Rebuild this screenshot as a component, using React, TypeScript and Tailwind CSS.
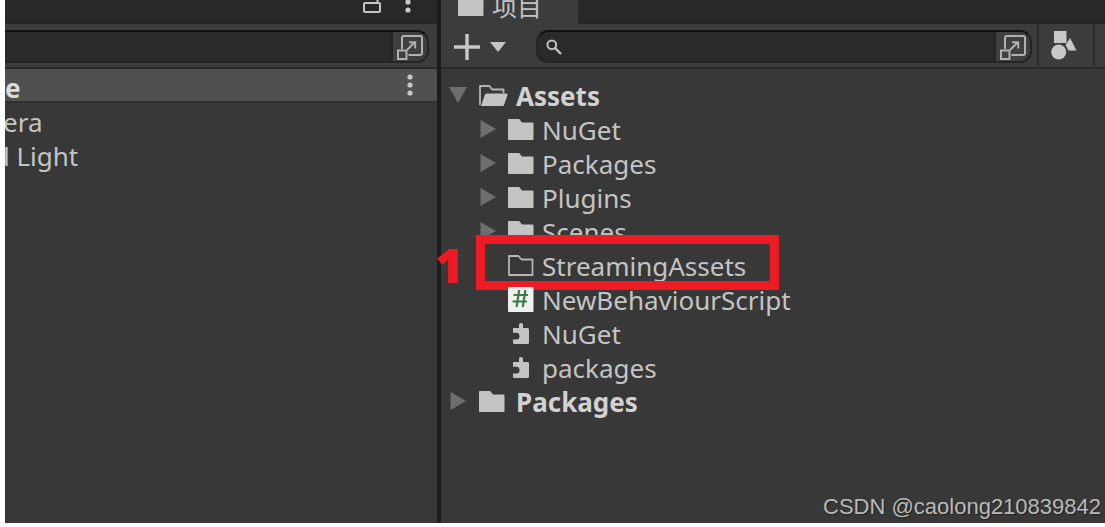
import type { ReactNode } from "react";

type IconName = "folder" | "open" | "empty" | "script" | "plugin";

type Item = {
  name: string;
  icon: IconName;
  expandable?: boolean;
  marked?: boolean;
};

const assets: Item[] = [
  { name: "NuGet", icon: "folder", expandable: true },
  { name: "Packages", icon: "folder", expandable: true },
  { name: "Plugins", icon: "folder", expandable: true },
  { name: "Scenes", icon: "folder", expandable: true },
  { name: "StreamingAssets", icon: "empty", marked: true },
  { name: "NewBehaviourScript", icon: "script" },
  { name: "NuGet", icon: "plugin" },
  { name: "packages", icon: "plugin" },
];

function FolderIcon() {
  return (
    <svg width="26" height="21" viewBox="0 0 26 21" fill="#c4c4c4">
      <path d="M0 1Q0 0 1 0H10.5Q11.5 0 12 1L14 3.5H24.5Q25.5 3.5 25.5 4.5V20Q25.5 21 24.5 21H1Q0 21 0 20Z" />
    </svg>
  );
}

function EmptyFolderIcon() {
  return (
    <svg width="26" height="21" viewBox="0 0 26 21" fill="none">
      <path
        d="M1 1H10.5L13.5 4.5H24.5V20H1Z"
        stroke="#b4b4b4"
        strokeWidth="1.8"
        strokeLinejoin="round"
      />
    </svg>
  );
}

function OpenFolderIcon() {
  return (
    <svg width="29" height="21" viewBox="0 0 29 21" fill="none">
      <path
        d="M1 20V1H10.5L13 4.5H24.5V8"
        stroke="#b4b4b4"
        strokeWidth="1.8"
        strokeLinejoin="round"
      />
      <path
        d="M2 21L6 9.5Q6.5 8.5 8 8.5H27.5Q29 8.5 28.5 10L25.2 19.5Q24.7 21 23.5 21Z"
        fill="#c4c4c4"
      />
    </svg>
  );
}

function ScriptIcon() {
  return (
    <svg width="26" height="25" viewBox="0 0 26 25">
      <rect width="25.5" height="25" rx="1" fill="#f0f0f0" />
      <path
        d="M11.2 3L8.6 20M17.4 3L14.8 20M5.5 8H20M4.5 14.5H19"
        stroke="#3b7d4a"
        strokeWidth="2.2"
      />
    </svg>
  );
}

function PluginIcon() {
  return (
    <svg width="16" height="21" viewBox="0 0 16 21" fill="#c4c4c4">
      <path d="M0 5H6V1.5Q6 0 8 0T10 1.5V5H14.5Q16 5 16 6.5V19.5Q16 21 14.5 21H1.5Q0 21 0 19.5V16.5H3.5Q6.5 16.5 6.5 13.2T3.5 9.8H0Z" />
    </svg>
  );
}

function ItemIcon({ name }: { name: IconName }) {
  if (name === "open") return <OpenFolderIcon />;
  if (name === "empty") return <EmptyFolderIcon />;
  if (name === "script") return <ScriptIcon />;
  if (name === "plugin") return <PluginIcon />;
  return <FolderIcon />;
}

function Arrow({ open, label }: { open?: boolean; label: string }) {
  return (
    <button
      aria-label={label}
      aria-expanded={!!open}
      className="flex w-[18px] justify-center"
    >
      <svg width="18" height="18" viewBox="0 0 18 18" fill="#6e6e6e">
        {open ? <path d="M0 1H18L9 17Z" /> : <path d="M1.5 0V18L17 9Z" />}
      </svg>
    </button>
  );
}

function Kebab() {
  return (
    <svg width="6" height="22" viewBox="0 0 6 22" fill="#c8c8c8">
      <circle cx="3" cy="3" r="2.6" />
      <circle cx="3" cy="11" r="2.6" />
      <circle cx="3" cy="19" r="2.6" />
    </svg>
  );
}

function ExpandIcon() {
  return (
    <svg
      width="26"
      height="25"
      viewBox="0 0 26 25"
      fill="none"
      stroke="#b0b0b0"
      strokeWidth="2"
    >
      <path d="M5 14V3Q5 1 7 1H23Q25 1 25 3V18Q25 20 23 20H11.5" />
      <rect x="1" y="15.5" width="8.5" height="8.5" />
      <path d="M10 15L17.5 7.5M12 7.2H18.2V13.5" />
    </svg>
  );
}

function PickerButton({ label }: { label: string }) {
  return (
    <button
      aria-label={label}
      className="flex w-[37px] shrink-0 items-center justify-center border-l-3 border-[#252525] bg-[#3f3f3f] pt-0.5"
    >
      <ExpandIcon />
    </button>
  );
}

function Toolbar({ children }: { children: ReactNode }) {
  return (
    <div className="flex h-[45px] items-center border-b-2 border-[#2a2a2a] bg-[#3c3c3c] pt-0.5">
      {children}
    </div>
  );
}

function HierarchyPanel() {
  return (
    <section className="min-w-0 overflow-hidden">
      <div className="flex h-6 items-end justify-end gap-6 overflow-hidden border-b border-[#232323] bg-[#282828] pr-[26px]">
        <button aria-label="Lock" className="pb-2.5">
          <svg
            width="18"
            height="16"
            viewBox="0 0 18 16"
            fill="none"
            stroke="#c4c4c4"
            strokeWidth="2"
          >
            <rect x="1" y="6" width="16" height="9" rx="1" />
            <path d="M14.5 6V0" />
          </svg>
        </button>
        <button aria-label="Menu" className="pb-2.5">
          <Kebab />
        </button>
      </div>
      <Toolbar>
        <div className="mr-2 flex h-[33px] flex-1 overflow-hidden rounded-r-xl border-2 border-l-0 border-[#252525] border-t-[#111] bg-[#2a2a2a]">
          <input
            type="text"
            aria-label="Search hierarchy"
            className="min-w-0 flex-1 bg-transparent text-[#c4c4c4] outline-none"
          />
          <PickerButton label="Hierarchy search filter" />
        </div>
      </Toolbar>
      <div className="flex h-[34px] items-center justify-between border-b-2 border-[#2f2f2f] bg-[#505050] pr-6">
        <span className="pt-1.5 font-bold text-[#dcdcdc]">e</span>
        <button aria-label="Scene menu">
          <Kebab />
        </button>
      </div>
      <ul className="pt-0.5">
        <li className="-ml-0.5">era</li>
        <li className="-ml-0.5">l Light</li>
      </ul>
    </section>
  );
}

function Marker() {
  return (
    <>
      <div className="absolute -top-3.5 left-[35px] h-[55px] w-[303px] border-9 border-[#ed1c24]" />
      <span className="absolute -top-0.5 -left-1.5 font-['Open_Sans',sans-serif] text-5xl/9 font-extrabold text-[#ed1c24]">
        1
      </span>
    </>
  );
}

function TreeRow({ item }: { item: Item }) {
  return (
    <li className="relative flex h-[34px] items-center pl-[38px]">
      <div className="mb-0.5 flex w-[29px] items-center">
        {item.expandable && <Arrow label={item.name} />}
      </div>
      <div className="mb-0.5 flex w-[26px] justify-center">
        <ItemIcon name={item.icon} />
      </div>
      <span className="ml-2">{item.name}</span>
      {item.marked && <Marker />}
    </li>
  );
}

function RootRow({ name, open }: { name: string; open?: boolean }) {
  return (
    <div className="flex h-[34px] items-center pl-2">
      <div className="mb-0.5 flex w-[30px] items-center">
        <Arrow open={open} label={name} />
      </div>
      <div className="mb-0.5 flex w-[29px]">
        <ItemIcon name={open ? "open" : "folder"} />
      </div>
      <span className="ml-2 font-bold text-[#d2d2d2]">{name}</span>
    </div>
  );
}

function ProjectPanel() {
  return (
    <section className="min-w-0">
      <div className="flex h-6 items-end overflow-hidden bg-[#282828]">
        <button className="flex h-8 w-[137px] shrink-0 items-end gap-2 bg-[#3c3c3c] pb-1.5 pl-[17px] text-[25px]/6">
          <span className="pb-0.5">
            <FolderIcon />
          </span>
          项目
        </button>
        <div className="h-full flex-1 border-b border-[#232323]" />
      </div>
      <Toolbar>
        <button
          aria-label="Create"
          className="ml-[13px] flex shrink-0 items-center gap-2.5"
        >
          <svg width="26" height="26" viewBox="0 0 26 26">
            <path d="M13 0V26M0 13H26" stroke="#c8c8c8" strokeWidth="3.4" />
          </svg>
          <svg width="16" height="10" viewBox="0 0 16 10" fill="#c4c4c4">
            <path d="M0 0H16L8 10Z" />
          </svg>
        </button>
        <div className="mr-[5px] ml-[30px] flex h-[33px] min-w-0 flex-1 overflow-hidden rounded-xl border-2 border-[#252525] border-t-[#111] bg-[#2a2a2a]">
          <label htmlFor="project-search" className="flex items-center pl-2">
            <svg
              width="16"
              height="16"
              viewBox="0 0 16 16"
              fill="none"
              stroke="#c4c4c4"
            >
              <circle cx="5.8" cy="5.8" r="4.4" strokeWidth="2" />
              <path d="M9 9L15 15" strokeWidth="2.4" />
            </svg>
          </label>
          <input
            id="project-search"
            type="text"
            aria-label="Search project"
            className="min-w-0 flex-1 bg-transparent pl-2 text-[#c4c4c4] outline-none"
          />
          <PickerButton label="Project search filter" />
        </div>
        <button
          aria-label="Search by type"
          className="-mt-0.5 flex h-full w-[58px] shrink-0 items-center border-x-2 border-[#2a2a2a] pl-3"
        >
          <svg width="26" height="29" viewBox="0 0 26 29" fill="#c8c8c8">
            <rect x="3" width="12.5" height="12" />
            <circle cx="7.7" cy="21" r="7.5" />
            <path d="M19 7L25.5 19.5H17.5L14.5 14Z" />
          </svg>
        </button>
        <div className="w-2.5 shrink-0" />
      </Toolbar>
      <div className="pt-2.5">
        <RootRow name="Assets" open />
        <ul>
          {assets.map((item, i) => (
            <TreeRow key={i} item={item} />
          ))}
        </ul>
        <RootRow name="Packages" />
      </div>
    </section>
  );
}

function App() {
  return (
    <div className="min-h-screen bg-white pb-1 pl-[5px]">
      <main className="relative grid min-h-[calc(100vh-4px)] grid-cols-[432fr_4px_664fr] bg-[#383838] font-['Noto_Sans','Noto_Sans_CJK_SC',sans-serif] text-[26px]/[34px] text-[#c4c4c4]">
        <HierarchyPanel />
        <div className="bg-[#1c1c1c]" />
        <ProjectPanel />
        <p className="absolute right-1 bottom-1 font-['Liberation_Sans',sans-serif] text-[22px]/6 text-[#b9b9b9] text-shadow-[1px_1px_1px_#222]">
          CSDN @caolong210839842
        </p>
      </main>
    </div>
  );
}

export default App;
